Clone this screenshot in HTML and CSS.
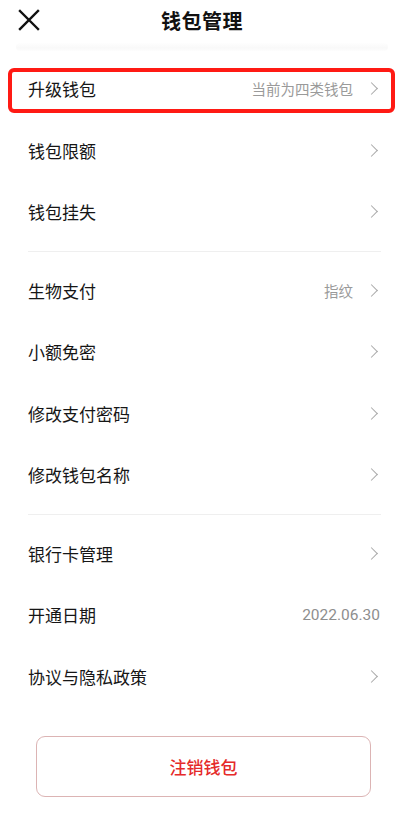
FILE: index.html
```html
<!DOCTYPE html>
<html lang="zh">
<head>
<meta charset="utf-8">
<title>钱包管理</title>
<link rel="stylesheet" href="styles.css">
</head>
<body>
<div class="page">
  <header class="header">
    <button class="close" aria-label="关闭">
      <svg width="22" height="22" viewBox="0 0 22 22"><path d="M2 2 L20 20 M20 2 L2 20" stroke="#111" stroke-width="2.4" stroke-linecap="square" fill="none"/></svg>
    </button>
    <h1 class="title">钱包管理</h1>
  </header>
  <div class="shade"></div>

  <section class="group first">
    <div class="row highlight">
      <span class="label">升级钱包</span>
      <span class="value">当前为四类钱包</span>
      <span class="chev"></span>
    </div>
    <div class="row"><span class="label">钱包限额</span><span class="chev"></span></div>
    <div class="row"><span class="label">钱包挂失</span><span class="chev"></span></div>
  </section>
  <div class="divider"></div>
  <section class="group">
    <div class="row"><span class="label">生物支付</span><span class="value">指纹</span><span class="chev"></span></div>
    <div class="row"><span class="label">小额免密</span><span class="chev"></span></div>
    <div class="row"><span class="label">修改支付密码</span><span class="chev"></span></div>
    <div class="row"><span class="label">修改钱包名称</span><span class="chev"></span></div>
  </section>
  <div class="divider"></div>
  <section class="group">
    <div class="row"><span class="label">银行卡管理</span><span class="chev"></span></div>
    <div class="row"><span class="label">开通日期</span><span class="value date">2022.06.30</span></div>
    <div class="row"><span class="label">协议与隐私政策</span><span class="chev"></span></div>
  </section>

  <div class="btn-wrap">
    <button class="cancel">注销钱包</button>
  </div>
</div>
</body>
</html>
```

FILE: styles.css
```css
* { box-sizing: border-box; }
html, body { margin: 0; padding: 0; background: #fff; }
body {
  font-family: "Noto Sans CJK SC", "Noto Sans", sans-serif;
  color: #111;
  width: 404px;
  height: 838px;
  overflow: hidden;
}
.page { position: relative; }
.header {
  position: relative;
  height: 42px;
  display: flex;
  align-items: center;
  justify-content: center;
}
.close {
  position: absolute;
  left: 18px;
  top: 9px;
  width: 22px;
  height: 22px;
  padding: 0;
  border: 0;
  background: none;
  display: block;
}
.close svg { display: block; }
.title {
  margin: 0;
  font-size: 20px;
  font-weight: 700;
  line-height: 40px;
  letter-spacing: 0.5px;
}
.shade {
  margin: 1px 16px 0;
  height: 8px;
  background: linear-gradient(to bottom, #fefefe, #f9f9f9 60%, #fdfdfd);
  border-radius: 4px;
}
.group.first { margin-top: 7px; }
.row {
  position: relative;
  height: 61.5px;
  display: flex;
  align-items: center;
  padding: 0 26px 0 28px;
}
.label {
  font-size: 17px;
  flex: 1;
  color: #161616;
}
.value {
  font-size: 14.5px;
  color: #9a9a9a;
  margin-right: 14px;
}
.value.date {
  font-family: "Roboto", "Noto Sans", sans-serif;
  font-size: 15.5px;
  margin-right: -2px;
  color: #8e8e8e;
}
.chev {
  width: 9px;
  height: 9px;
  border-top: 1.4px solid #a8a8a8;
  border-right: 1.4px solid #a8a8a8;
  transform: rotate(45deg);
  margin-right: 2px;
}
.highlight::after {
  content: "";
  position: absolute;
  left: 8px;
  right: 9px;
  top: 10px;
  bottom: 7px;
  border: 4px solid #ff1a14;
  border-radius: 6px;
}
.divider {
  height: 1px;
  background: #efefef;
  margin: 8px 23px 8px 28px;
}
.btn-wrap {
  padding: 29px 33px 0 36px;
}
.cancel {
  width: 100%;
  height: 61px;
  border: 1px solid #dcb4b4;
  border-radius: 9px;
  background: #fff;
  color: #e52a2a;
  font-family: "Noto Sans CJK SC", sans-serif;
  font-size: 17px;
  font-weight: 500;
}
```
